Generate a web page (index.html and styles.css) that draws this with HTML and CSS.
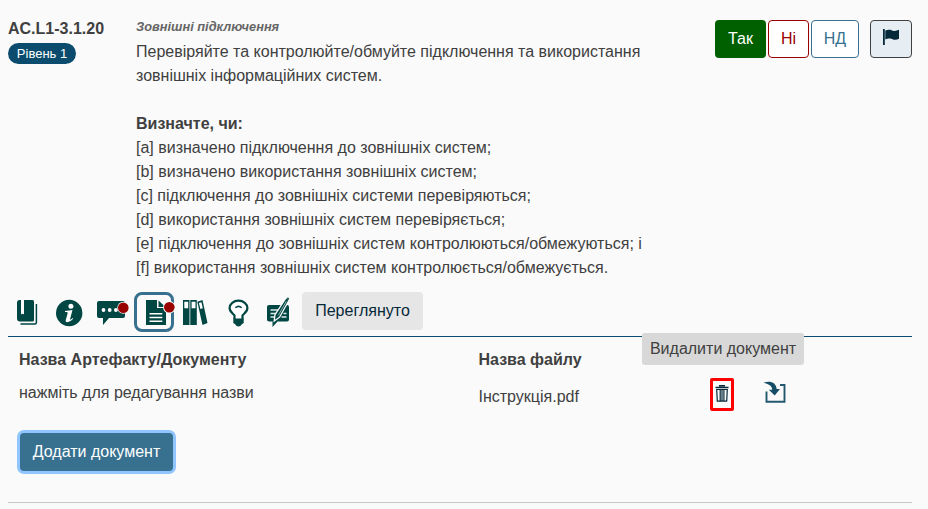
FILE: index.html
```html
<!DOCTYPE html>
<html lang="uk">
<head>
<meta charset="utf-8">
<title>AC.L1-3.1.20</title>
<link rel="stylesheet" href="styles.css">
</head>
<body>
<main class="requirement">
  <section class="question">
    <div class="ident">
      <div class="code">AC.L1-3.1.20</div>
      <span class="level">Рівень 1</span>
    </div>
    <div class="description">
      <h2>Зовнішні підключення</h2>
      <p>Перевіряйте та контролюйте/обмуйте підключення та використання<br>зовнішніх інформаційних систем.</p>
      <div class="objectives">
        <strong>Визначте, чи:</strong>
        <div>[a] визначено підключення до зовнішніх систем;</div>
        <div>[b] визначено використання зовнішніх систем;</div>
        <div>[c] підключення до зовнішніх системи перевіряються;</div>
        <div>[d] використання зовнішніх систем перевіряється;</div>
        <div>[e] підключення до зовнішніх систем контролюються/обмежуються; і</div>
        <div>[f] використання зовнішніх систем контролюється/обмежується.</div>
      </div>
    </div>
    <div class="answers">
      <button class="btn yes">Так</button>
      <button class="btn no">Ні</button>
      <button class="btn na">НД</button>
      <button class="btn flag"><svg width="16" height="16" viewBox="0 0 16 16"><path d="M0 0h1.800v16H0zM2.300 1.500C6-.2 8 1 10 1.700c2 .6 4-.2 6-.9v9c-2 1.100-4 1.300-6 .6C8 9.600 6 8.700 2.300 10.400z"/></svg></button>
    </div>
  </section>

  <nav class="toolbar">
    <span class="tool"><svg viewBox="0 0 42 40"><path d="M11.500 8H13v14.500q1.500-1.500 3 0V8h8.500q1.500 0 1.500 1.500V28q0 1.500-1.500 1.500H12q-3-.1-3-3.300V11q0-3 2.500-3z"/><path d="M28.400 12V30.500q0 1.500-1.500 1.500H12.500" fill="none" stroke="#004643" stroke-width="1.500"/></svg></span>
    <span class="tool"><svg viewBox="0 0 42 40"><circle cx="19.200" cy="21" r="13.200"/><circle cx="20.900" cy="14.200" r="2.500" fill="#fff"/><path d="M15 19.100l7.500-1.200-2.400 9c-.3 1.300.8.8 2.400-.9l.7.600c-2.300 3.700-8.300 5-7.500 1.600l1.900-6.700c.4-1.400-.8-1.500-2.600-1.400z" fill="#fff"/></svg></span>
    <span class="tool"><svg viewBox="0 0 42 40"><path d="M7 9h24q2 0 2 2v13q0 2-2 2H17l-6 7v-7H7q-2 0-2-2V11q0-2 2-2z"/><g fill="#fff"><circle cx="11.500" cy="18" r="1.900"/><circle cx="17.700" cy="18" r="1.900"/><circle cx="23.900" cy="18" r="1.900"/></g><circle cx="31.300" cy="15.800" r="6" fill="#fafafa"/><circle cx="31.300" cy="15.800" r="5.300" fill="#900"/></svg></span>
    <span class="tool"><span class="selected"><svg viewBox="3 3 34 34"><path d="M12 8h11v8h9v17H12z"/><path d="M24.500 8.500l7 6.500h-7z"/><path d="M15.500 21h12.800v1.600H15.500zm0 3.700h12.800v1.600H15.500zm0 3.700h12.800V30H15.500z" fill="#fff"/><circle cx="35.300" cy="15.300" r="6.200" fill="#fafafa"/><circle cx="35.300" cy="15.300" r="5.300" fill="#900"/></svg></span></span>
    <span class="tool"><svg viewBox="0 0 42 40"><path d="M7 8h6.500v25H7zm7.300 0h6.500v25h-6.500zm7 1.800l5.200-1.800 5 23-5 1.900z"/><path d="M8.300 9.800h3.900v6.400H8.300zm7.300 0h3.900v6.400h-3.900zM22.900 11.100l2.500-.9 1.400 6-2.400.9z" fill="#fff"/></svg></span>
    <span class="tool"><svg viewBox="0 0 42 40"><path d="M16.500 27v-3.500c-.8-1.500-4.900-3.200-4.900-7.400 0-4.300 4-7.400 8.900-7.400s8.900 3.100 8.900 7.400c0 4.200-4.100 5.900-4.900 7.400V27" fill="#fff" stroke="#004643" stroke-width="2.200"/><path d="M15.300 26.500h10.400V31l-2.200 1.500c-.8 2.600-5.200 2.600-6 0L15.300 31z"/><path d="M17.300 15.800q3.200-2.800 6.400 0" fill="none" stroke="#004643" stroke-width="1.500"/></svg></span>
    <span class="tool"><svg viewBox="0 0 42 40"><path d="M9 13h18q2 0 2 2v12.500q0 2-2 2H17.500l-5 5.500v-5.500H9q-2 0-2-2V15q0-2 2-2z"/><path d="M10.500 18h10m-10 3.500h7.500m5.500 0h3m-16 3.500h5.500m5.500 0h5" fill="none" stroke="#dbe9e7" stroke-width="1.300"/><path d="M26.400 6.500l2 1.400-9.300 16.800-4.100 3 .6-4.800z" fill="#004643" stroke="#fafafa" stroke-width="2.600"/><path d="M26.400 6.500l2 1.400-9.300 16.800-4.100 3 .6-4.800zM26.700 6.100l1.300-.6 1.100 1-.7 1.400z"/><path d="M18.200 23.500l8.200-14.300" stroke="#b7d0cd" stroke-width=".8"/></svg></span>
    <button class="btn reviewed">Переглянуто</button>
  </nav>

  <section class="documents">
    <div class="grid">
      <div class="column">
        <strong>Назва Артефакту/Документу</strong>
        <div class="doc-name">нажміть для редагування назви</div>
      </div>
      <div class="column">
        <strong>Назва файлу</strong>
        <div class="file-name">Інструкція.pdf</div>
      </div>
      <div class="actions">
        <span class="trash"><svg width="18" height="27" viewBox="0 0 18 27"><path d="M6.700 5.500V4.700h4.600v.8M2.500 6.500h13" fill="none" stroke="#06293a" stroke-width="1.500"/><path d="M3.700 8.500l.6 11.600h9.400l.6-11.600zm3.500 0v11.500M9 8.500V20m1.900-11.500V20" fill="none" stroke="#06293a" stroke-width="1.200"/></svg><span class="tooltip">Видалити документ</span></span>
        <svg class="download" width="24" height="24" viewBox="0 0 24 24"><path d="M2.500 10.500v10.200h18V4h-4.500" fill="none" stroke="#23586f" stroke-width="1.900"/><path d="M-.5 1.700C7-.6 12 2 12.700 8H16l-5.300 6.500L4.800 8.700h3.400C8.200 4.800 4.500 2.700-.5 1.700z" fill="#164e67"/></svg>
      </div>
    </div>
    <button class="btn add">Додати документ</button>
  </section>
</main>
</body>
</html>
```
FILE: styles.css
```css
* { box-sizing: border-box; }
body {
  margin: 0;
  background: #fafafa;
  color: #404040;
  font: 16px/24px "Liberation Sans", Arial, sans-serif;
}
.requirement {
  width: 904px;
  height: 503px;
  margin-left: 8px;
  border-bottom: 1px solid #c8c8c8;
}
.question {
  display: flex;
  height: 292px;
  padding-top: 16px;
}
.ident { width: 128px; flex: none; padding-top: 1px; }
.code { font-weight: 700; }
.level {
  display: block;
  width: 68px;
  height: 21px;
  margin-top: 2px;
  border-radius: 11px;
  background: #0b4c6e;
  color: #fff;
  font-size: 13px;
  line-height: 21px;
  text-align: center;
}
.description { flex: 1; white-space: nowrap; }
h2 {
  height: 24px;
  margin: 0;
  color: #666;
  font-size: 12.8px;
  font-style: italic;
  line-height: 21px;
}
p { margin: 0 0 24px; }
.answers {
  display: flex;
  flex: none;
  align-items: flex-start;
  gap: 2px;
  padding-top: 4px;
}
.btn {
  height: 38px;
  padding: 0;
  border: 1px solid transparent;
  border-radius: 4px;
  font: inherit;
}
.yes { width: 51px; background: #006000; color: #fff; }
.no { width: 41px; background: #fff; border-color: #900; color: #900; }
.na { width: 48px; background: #fff; border-color: #37718f; color: #37718f; }
.flag {
  width: 42px;
  margin-left: 9px;
  background: #e7eef3;
  border-color: #404040;
  fill: #06293a;
}
.flag svg { display: block; margin: -5px auto 0; }
.toolbar {
  display: flex;
  height: 45px;
  border-bottom: 1px solid #0b4c6e;
}
.tool { width: 42px; height: 40px; fill: #004643; }
.tool svg { display: block; width: 100%; height: 100%; overflow: visible; }
.selected {
  display: block;
  width: 40px;
  height: 40px;
  border: 3px solid #37718f;
  border-radius: 8px;
}
.reviewed { width: 121px; background: #e6e6e6; color: #06293a; }
.documents { padding: 11px 11px 0; }
.grid {
  display: grid;
  grid-template-columns: 459.500px 231.500px 1fr;
  height: 85px;
}
.doc-name { margin-top: 9px; }
.file-name { margin-top: 13px; }
.actions {
  display: flex;
  align-items: flex-start;
  gap: 30px;
  padding-top: 30px;
}
.trash {
  position: relative;
  width: 24px;
  height: 33px;
  border: 3px solid #f00;
  border-radius: 2px;
}
.trash svg { display: block; }
.download { margin-top: 3px; overflow: visible; }
.tooltip {
  position: absolute;
  left: -71px;
  top: -48px;
  width: 162px;
  height: 32px;
  border-radius: 3px;
  background: #d8d8d8;
  line-height: 32px;
  text-align: center;
  white-space: nowrap;
}
.add {
  width: 153px;
  margin-left: 1px;
  background: #37718f;
  color: #fff;
  box-shadow: 0 0 0 3px #91c5ff;
}
```
